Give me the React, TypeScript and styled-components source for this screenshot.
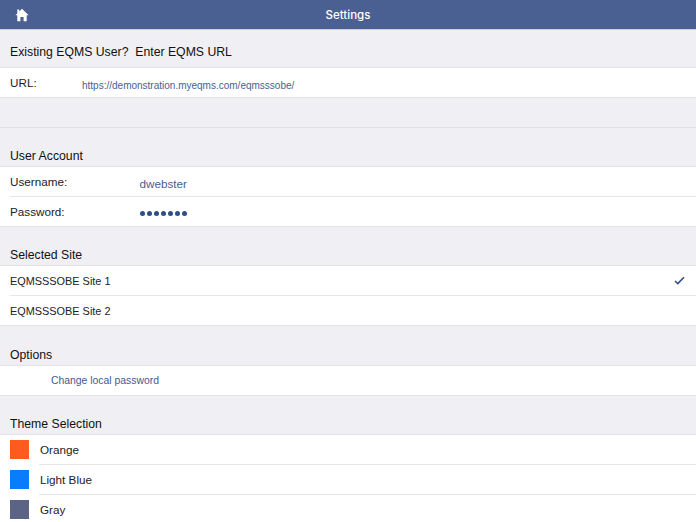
import React from "react";
import styled, { createGlobalStyle } from "styled-components";

const Global = createGlobalStyle`
  html, body { margin: 0; padding: 0; background: #efeff4; }
  body { font-family: "Liberation Sans", Arial, sans-serif; }
`;

const Page = styled.div`
  width: 696px;
  height: 522px;
  overflow: hidden;
  background: #efeff4;
  display: flex;
  flex-direction: column;
`;

const NavBar = styled.header`
  height: 29px;
  flex: none;
  background: #4a6092;
  border-bottom: 1px solid #c9cdd9;
  display: grid;
  grid-template-columns: 1fr auto 1fr;
  align-items: center;
  padding: 0 15px;
`;

const HomeButton = styled.div`
  display: flex;
  align-items: center;
`;

const NavTitle = styled.h1`
  margin: 0;
  font-family: "Inter", "Liberation Sans", sans-serif;
  font-size: 11.5px;
  font-weight: 500;
  color: #fff;
`;

const SectionTitle = styled.div<{ $h: number; $pb?: number }>`
  height: ${(p) => p.$h}px;
  flex: none;
  box-sizing: border-box;
  padding: 0 0 ${(p) => p.$pb ?? 2}px 10px;
  display: flex;
  align-items: flex-end;
  font-size: 12.25px;
  line-height: 15px;
  color: #111;
`;

const Group = styled.div`
  background: #fff;
  flex: none;
  border-top: 1px solid #e2e2e6;
  border-bottom: 1px solid #e2e2e6;
`;

const Spacer = styled.div`
  height: 29px;
  flex: none;
  border-bottom: 1px solid #e2e2e6;
`;

const Row = styled.div<{ $divider?: number }>`
  height: ${(p) => (p.$divider === undefined ? 29 : 30)}px;
  box-sizing: border-box;
  padding: ${(p) => (p.$divider === undefined ? 0 : 1)}px 10px 0;
  display: flex;
  align-items: center;
  font-size: 11.7px;
  color: #222;
  position: relative;
  &::before {
    content: "";
    display: ${(p) => (p.$divider === undefined ? "none" : "block")};
    position: absolute;
    top: 0;
    right: 0;
    left: ${(p) => p.$divider}px;
    height: 1px;
    background: #e6e6ea;
  }
`;

const SiteName = styled.span`
  font-size: 10.9px;
`;

const FieldLabel = styled.span<{ $w: number }>`
  width: ${(p) => p.$w}px;
  flex: none;
`;

const FieldValue = styled.span<{ $size: number; $top: number }>`
  font-size: ${(p) => p.$size}px;
  color: #4a6092;
  position: relative;
  top: ${(p) => p.$top}px;
`;

const Dots = styled.span`
  display: flex;
  gap: 1.8px;
  position: relative;
  top: 2px;
`;

const Dot = styled.i`
  width: 5.2px;
  height: 5.2px;
  border-radius: 50%;
  background: #2f4d87;
`;

const Check = styled.svg`
  margin-left: auto;
  margin-right: 1px;
`;

const LinkText = styled.span`
  margin-left: 41px;
  font-size: 10.4px;
  color: #3f5a92;
`;

const Swatch = styled.span<{ $c: string }>`
  width: 19px;
  height: 19px;
  flex: none;
  background: ${(p) => p.$c};
  margin-right: 11px;
`;

const themes = [
  { name: "Orange", color: "#ff5a1f" },
  { name: "Light Blue", color: "#0a7dff" },
  { name: "Gray", color: "#5b6484" },
];

export default function App() {
  return (
    <Page>
      <Global />
      <NavBar>
        <HomeButton>
          <svg width="14" height="14" viewBox="0 0 14 14" fill="#fff">
            <path d="M7 .8 13.6 7.2H11.7V13.2H8.6V9H5.4V13.2H2.3V7.2H.4L2.3 5.4V1.6H4.2V3.6Z" />
          </svg>
        </HomeButton>
        <NavTitle>Settings</NavTitle>
        <span />
      </NavBar>
      <SectionTitle $h={37} $pb={7}>Existing EQMS User?&nbsp; Enter EQMS URL</SectionTitle>
      <Group>
        <Row>
          <FieldLabel $w={72}>URL:</FieldLabel>
          <FieldValue $size={10} $top={3}>https://demonstration.myeqms.com/eqmsssobe/</FieldValue>
        </Row>
      </Group>
      <Spacer />
      <SectionTitle $h={38}>User Account</SectionTitle>
      <Group>
        <Row>
          <FieldLabel $w={129.5}>Username:</FieldLabel>
          <FieldValue $size={11.7} $top={2}>dwebster</FieldValue>
        </Row>
        <Row $divider={10}>
          <FieldLabel $w={130}>Password:</FieldLabel>
          <Dots>
            {Array.from({ length: 7 }, (_, i) => (
              <Dot key={i} />
            ))}
          </Dots>
        </Row>
      </Group>
      <SectionTitle $h={38}>Selected Site</SectionTitle>
      <Group>
        <Row>
          <SiteName>EQMSSSOBE Site 1</SiteName>
          <Check width="11" height="9" viewBox="0 0 11 9" fill="none" stroke="#2f4d87" strokeWidth="1.6">
            <path d="M1 5 3.8 7.6 10 1.2" />
          </Check>
        </Row>
        <Row $divider={10}>
          <SiteName>EQMSSSOBE Site 2</SiteName>
        </Row>
      </Group>
      <SectionTitle $h={39}>Options</SectionTitle>
      <Group>
        <Row>
          <LinkText>Change local password</LinkText>
        </Row>
      </Group>
      <SectionTitle $h={38}>Theme Selection</SectionTitle>
      <Group>
        {themes.map((t, i) => (
          <Row key={t.name} $divider={i === 0 ? undefined : 39}>
            <Swatch $c={t.color} />
            {t.name}
          </Row>
        ))}
      </Group>
    </Page>
  );
}
